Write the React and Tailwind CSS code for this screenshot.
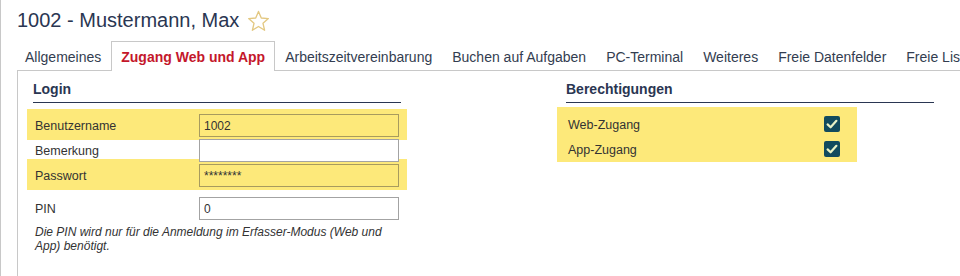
import React from "react";

const tabs = [
  "Allgemeines",
  "Zugang Web und App",
  "Arbeitszeitvereinbarung",
  "Buchen auf Aufgaben",
  "PC-Terminal",
  "Weiteres",
  "Freie Datenfelder",
  "Freie Listen",
];

function Star() {
  return (
    <svg width="23" height="22" viewBox="0 0 24 23" className="ml-[8px] mt-[2px] shrink-0">
      <polygon
        points="12,1.5 14.9,8.4 22.3,9 16.7,13.9 18.4,21.2 12,17.3 5.6,21.2 7.3,13.9 1.7,9 9.1,8.4"
        fill="none"
        stroke="#e3c882"
        strokeWidth="1.4"
        strokeLinejoin="round"
      />
    </svg>
  );
}

function Check() {
  return (
    <div className="w-[16px] h-[16px] rounded-[2px] bg-[#124b5e] flex items-center justify-center shrink-0">
      <svg width="16" height="16" viewBox="0 0 16 16">
        <polyline
          points="3.6,8.4 6.6,11.3 12.4,4.8"
          fill="none"
          stroke="#e9f2c6"
          strokeWidth="2.2"
          strokeLinecap="round"
          strokeLinejoin="round"
        />
      </svg>
    </div>
  );
}

function Field({ label, value, highlight }) {
  const row = (
    <div className="flex items-center h-[25px]">
      <div className="w-[166px] pl-[2px] text-[12.5px] text-[#333333]">{label}</div>
      <input
        readOnly
        value={value}
        className={
          highlight
            ? "relative self-start w-[200px] h-[23px] border border-[#a89b5e] bg-transparent px-[4px] text-[12px] text-[#333333] outline-none"
            : "relative self-start w-[200px] h-[23px] border border-[#a3a3a3] bg-white px-[4px] text-[12px] text-[#333333] outline-none"
        }
      />
    </div>
  );
  if (!highlight) return row;
  return (
    <div className="-mt-[5px] pt-[5px] -mb-[1px] pb-[1px] -mx-[6px] px-[6px] bg-[#fde97a]">{row}</div>
  );
}

function Heading({ children }) {
  return (
    <div className="text-[14px] leading-[16px] font-bold text-[#2a3652] pb-[5px] border-b border-[#2a3652]">
      {children}
    </div>
  );
}

export default function App() {
  return (
    <div className="w-[960px] h-[276px] overflow-hidden bg-white border-l border-[#c8c8c8] font-['Liberation_Sans',Arial,sans-serif]">
      <div className="flex items-start pl-[16px] pt-[8px]">
        <h1 className="text-[20px] leading-[24px] text-[#2a3652] font-normal whitespace-nowrap">
          1002 - Mustermann, Max
        </h1>
        <Star />
      </div>

      <div className="mt-[9px] ml-[16px] flex border-b border-[#c8c8c8]">
        <div className="flex -ml-[2px]">
          {tabs.map((t, i) =>
            i === 1 ? (
              <div
                key={t}
                className="shrink-0 whitespace-nowrap px-[9px] pt-[7px] pb-[6px] -mb-px leading-[16px] text-[14px] font-bold text-[#c4172b] bg-white border border-b-0 border-[#c8c8c8]"
              >
                {t}
              </div>
            ) : (
              <div
                key={t}
                className="shrink-0 whitespace-nowrap px-[9px] pt-[7px] pb-[5px] leading-[16px] text-[14px] text-[#333d50] border border-b-0 border-transparent"
              >
                {t}
              </div>
            )
          )}
        </div>
      </div>

      <div className="ml-[16px] h-[206px] border-l border-[#c8c8c8] pt-[10px] pl-[15px] flex">
        <div className="w-[368px] shrink-0">
          <Heading>Login</Heading>
          <div className="mt-[11px]">
            <Field label="Benutzername" value="1002" highlight />
            <Field label="Bemerkung" value="" />
            <Field label="Passwort" value="********" highlight />
            <div className="mt-[8px]">
              <Field label="PIN" value="0" />
            </div>
            <p className="mt-[3px] pl-[2px] text-[12px] leading-[14px] italic text-[#333333]">
              Die PIN wird nur für die Anmeldung im Erfasser-Modus (Web und App) benötigt.
            </p>
          </div>
        </div>

        <div className="ml-[165px] w-[368px] shrink-0">
          <Heading>Berechtigungen</Heading>
          <div className="mt-[4px] -ml-[9px] w-[300px] pt-[4px] pb-[1px] bg-[#fde97a]">
            <div className="flex items-center h-[25px] pl-[11px]">
              <div className="w-[256px] pt-[4px] text-[12.5px] text-[#333333]">Web-Zugang</div>
              <Check />
            </div>
            <div className="flex items-center h-[25px] pl-[11px]">
              <div className="w-[256px] pt-[4px] text-[12.5px] text-[#333333]">App-Zugang</div>
              <Check />
            </div>
          </div>
        </div>
      </div>
    </div>
  );
}
